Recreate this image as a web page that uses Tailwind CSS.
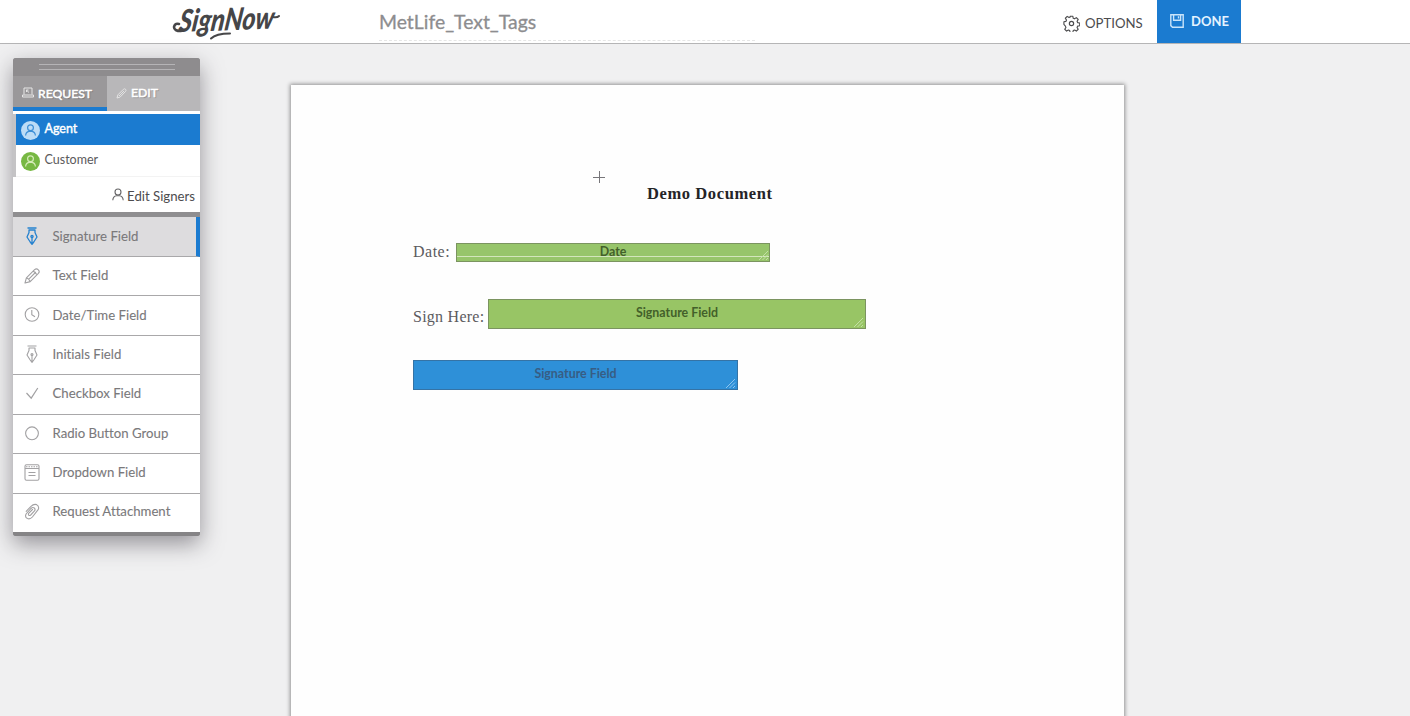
<!DOCTYPE html>
<html lang="en">
<head>
    <meta charset="UTF-8">
    <meta name="viewport" content="width=device-width, initial-scale=1.0">
    <title>MetLife_Text_Tags - SignNow</title>
    <!-- Tailwind CSS -->
    <script src="https://cdn.jsdelivr.net/npm/@tailwindcss/browser@4"></script>
</head>
<body class="h-screen overflow-hidden bg-[#f0f0f1] font-['Lato',sans-serif] [font-variant-ligatures:none] flex flex-col">

    <!-- Top bar -->
    <header class="h-[43.5px] shrink-0 bg-white border-b border-[#b5b5b6] flex">
        <div class="w-[206px] ml-[172px] shrink-0">
            <svg class="w-[130px] h-[42px] overflow-visible" viewBox="0 0 130 42" fill="none">
                <text x="0" y="0" transform="translate(6 32) rotate(-2) skewX(-10)" textLength="95" lengthAdjust="spacingAndGlyphs" font-family="Lato, sans-serif" font-size="31" font-weight="900" font-style="italic" fill="#464648">SignNow</text>
                <!-- swashes on the S, the g and the w -->
                <path d="M9 31q-7 0-7-4 1-4 5-3" stroke="#464648" stroke-width="2.6" stroke-linecap="round"/>
                <path d="M39 38.5q5-5 19-5" stroke="#464648" stroke-width="2" stroke-linecap="round"/>
                <path d="M101 17q4 1 6-1" stroke="#464648" stroke-width="2" stroke-linecap="round"/>
            </svg>
        </div>
        <div class="w-[376px] ml-px h-[41px] border-b border-dashed border-[#e6e6e6] pt-[8px] shrink-0">
            <h1 class="text-[19.4px] leading-[28px] text-[#8d8d8f] [-webkit-text-stroke:0.3px_#8d8d8f]">MetLife_Text_Tags</h1>
        </div>
        <div class="ml-[308px] w-[94px] flex items-center gap-[5px] pt-[4px]">
            <svg class="w-[17px] h-[17px] shrink-0" viewBox="0 0 24 24" fill="none" stroke="#4c4c4e" stroke-width="1.7" stroke-linejoin="round">
                <path d="M10 1.5h4l.7 3.2 1.9.8 2.8-1.8 2.8 2.8-1.7 2.8.8 1.9 3.2.7v4l-3.2.7-.8 1.9 1.7 2.8-2.8 2.8-2.8-1.7-1.9.8-.7 3.2h-4l-.7-3.2-1.9-.8-2.8 1.7-2.8-2.8 1.8-2.8-.8-1.9L.5 14v-4l3.2-.7.8-1.9-1.8-2.8 2.8-2.8 2.8 1.8 1.9-.8z" transform="translate(.8 .3) scale(.93)"/>
                <circle cx="12" cy="12" r="3"/>
            </svg>
            <span class="text-[13.2px] pt-px text-[#4c4c4e]">OPTIONS</span>
        </div>
        <button class="w-[83.5px] h-[42.5px] bg-[#1b7bd0] text-[#e4f3ff] flex items-center gap-[7px] pl-[13px]">
            <svg class="w-[14px] h-[14px] shrink-0" viewBox="0 0 14 14" fill="none" stroke="#c9e4fa" stroke-width="1.4">
                <path d="M.8.8h12.4v12.4H2.5L.8 11.6z"/>
                <path d="M3.6 1v5.2h7V1M8.5 2.2v2.3"/>
            </svg>
            <span class="text-[13px] font-bold pt-px">DONE</span>
        </button>
    </header>

    <main class="flex-1 flex items-start">

        <!-- Tools panel -->
        <aside class="w-[187px] ml-[13px] mt-[14.5px] shrink-0 rounded-t-[3px] rounded-b-[3px] bg-[#8f8e90] shadow-[0_8px_22px_rgba(60,55,65,0.5)] overflow-hidden">
            <div class="h-[18px] flex flex-col items-center pt-[6px] gap-[4px] bg-[#8e8c8e]">
                <div class="w-[136px] h-px bg-[#b5b4b6]"></div>
                <div class="w-[136px] h-px bg-[#b5b4b6]"></div>
            </div>
            <div class="h-[35px] flex text-white text-[12.2px] [text-shadow:1px_1px_1px_rgba(0,0,0,0.25)]">
                <div class="w-[94px] bg-[#9a989a] border-b-4 border-[#1b7bd0] flex items-center gap-[4px] pl-[9px] pt-[5px]">
                    <svg class="w-[12px] h-[11px] shrink-0 -mt-[3px]" viewBox="0 0 12 11" fill="none" stroke="#e6e6e6" stroke-width="1">
                        <path d="M2 7.5V1h8v6.5M.5 8h11v2H.5zM4.5 3.2l2.5 2.3M4.5 5V3h2"/>
                    </svg>
                    <span class="[-webkit-text-stroke:0.5px_white]">REQUEST</span>
                </div>
                <div class="w-[93px] bg-[#b8b7b9] flex items-center gap-[4px] pl-[9px]">
                    <svg class="w-[11px] h-[11px] shrink-0 -mt-px" viewBox="0 0 17 17" fill="none" stroke="#e4e4e4" stroke-width="1.5" stroke-linejoin="round">
                        <path d="M1.5 15.5l1.5-5L11.5 2q1.8-1.5 3.3 0t0 3.3L6.4 14zM4.7 12.4L12.5 4.5"/>
                    </svg>
                    <span class="[-webkit-text-stroke:0.5px_white]">EDIT</span>
                </div>
            </div>

            <!-- Signers -->
            <div class="bg-white pt-[3px] h-[101px] text-[12.5px]">
                <div class="border-l-[3px] border-[#c4c3c5]">
                    <div class="h-[31px] bg-[#1b7bd0] flex items-center pl-[5px] gap-[4.5px] text-white">
                        <svg class="w-[19px] h-[19px] shrink-0 mt-[2px]" viewBox="0 0 19 19" fill="none" stroke="#3d8fd6" stroke-width="1.2">
                            <circle cx="9.5" cy="9.5" r="9.5" fill="#bcdcf6" stroke="none"/>
                            <circle cx="9.5" cy="6.8" r="2.9"/>
                            <path d="M4.6 14.5q.2-3.6 3.4-4.2h3q3.2.6 3.4 4.2"/>
                        </svg>
                        <span class="-mt-px [-webkit-text-stroke:0.4px_white]">Agent</span>
                    </div>
                    <div class="h-[32px] flex items-center pl-[5px] gap-[4.5px] text-[#5b5a5c] border-b border-[#f3f3f3]">
                        <svg class="w-[19px] h-[19px] shrink-0 mt-[2px]" viewBox="0 0 19 19" fill="none" stroke="#d5ebb8" stroke-width="1.2">
                            <circle cx="9.5" cy="9.5" r="9.5" fill="#77b843" stroke="none"/>
                            <circle cx="9.5" cy="6.8" r="2.9"/>
                            <path d="M4.6 14.5q.2-3.6 3.4-4.2h3q3.2.6 3.4 4.2"/>
                        </svg>
                        <span>Customer</span>
                    </div>
                </div>
                <div class="h-[35px] flex items-center justify-end gap-[3px] pr-[5px] pt-[4px] text-[#4d4c4e] text-[13.2px]">
                    <svg class="w-[12px] h-[13px] shrink-0 -mt-[4px]" viewBox="0 0 12 13" fill="none" stroke="#666567" stroke-width="1.1">
                        <circle cx="6" cy="4" r="3"/>
                        <path d="M.8 12.3q.2-4.3 3.8-4.6h2.8q3.6.3 3.8 4.6"/>
                    </svg>
                    <span>Edit Signers</span>
                </div>
            </div>
            <div class="h-[5px] bg-[#8f8e90]"></div>

            <!-- Field types -->
            <ul class="h-[315px] flex flex-col text-[13.2px] text-[#7a797b] [-webkit-text-stroke:0.1px_#7a797b] divide-y divide-[#a9a8aa]">
                <li class="flex-1 bg-[#dddcde] border-r-[4px] border-r-[#1b7bd0] flex items-center pl-[9.5px] gap-[12px]">
                    <svg class="w-[18px] h-[18px] shrink-0" viewBox="0 0 18 18" fill="none" stroke="#2682cf" stroke-width="1.3" stroke-linejoin="round">
                        <path d="M4.5 1h9M6 3h6v2.5l2 4.5-3.2 5L9 17.3 7.2 15 4 10l2-4.5zM9 17V9.5"/>
                        <circle cx="9" cy="9.5" r="1.1"/>
                    </svg>
                    <span class="pt-px">Signature Field</span>
                </li>
                <li class="flex-1 bg-white flex items-center pl-[9.5px] gap-[12px]">
                    <svg class="w-[18px] h-[18px] shrink-0" viewBox="0 0 18 18" fill="none" stroke="#a2a1a3" stroke-width="1.1" stroke-linejoin="round">
                        <path d="M2 16l1.4-5.2 8.2-8.2q1.9-1.5 3.7.2t.1 3.6l-8.2 8.2zM3.4 10.8q2.4 1 3.8 3.8M5.3 12.6l7.6-7.6M10.3 4l3.7 3.7"/>
                    </svg>
                    <span class="pt-px">Text Field</span>
                </li>
                <li class="flex-1 bg-white flex items-center pl-[9.5px] gap-[12px]">
                    <svg class="w-[18px] h-[18px] shrink-0" viewBox="0 0 18 18" fill="none" stroke="#a2a1a3" stroke-width="1.1">
                        <circle cx="9" cy="8.5" r="6.8"/>
                        <path d="M8.8 4v4.7l3.2 2"/>
                    </svg>
                    <span class="pt-px">Date/Time Field</span>
                </li>
                <li class="flex-1 bg-white flex items-center pl-[9.5px] gap-[12px]">
                    <svg class="w-[18px] h-[18px] shrink-0 -mt-px" viewBox="0 0 18 18" fill="none" stroke="#a2a1a3" stroke-width="1.1" stroke-linejoin="round">
                        <path d="M4.5 1h9M6 3h6v2.5l2 4.5-3.2 5L9 17.3 7.2 15 4 10l2-4.5zM9 17V9.5"/>
                        <circle cx="9" cy="9.5" r="1"/>
                    </svg>
                    <span>Initials Field</span>
                </li>
                <li class="flex-1 bg-white flex items-center pl-[9.5px] gap-[12px]">
                    <svg class="w-[18px] h-[18px] shrink-0" viewBox="0 0 18 18" fill="none" stroke="#a2a1a3" stroke-width="1.2">
                        <path d="M3.5 8l4.7 5.2L14.8 3"/>
                    </svg>
                    <span>Checkbox Field</span>
                </li>
                <li class="flex-1 bg-white flex items-center pl-[9.5px] gap-[12px]">
                    <svg class="w-[18px] h-[18px] shrink-0" viewBox="0 0 18 18" fill="none" stroke="#a2a1a3" stroke-width="1.1">
                        <circle cx="9" cy="8.3" r="6.4"/>
                    </svg>
                    <span>Radio Button Group</span>
                </li>
                <li class="flex-1 bg-white flex items-center pl-[9.5px] gap-[12px]">
                    <svg class="w-[18px] h-[18px] shrink-0" viewBox="0 0 18 18" fill="none" stroke="#a2a1a3" stroke-width="1.1">
                        <rect x="2" y=".8" width="14" height="15.4" rx="1.5"/>
                        <path d="M2 4.500h14M5.500 8.500h7M5.500 11.500h7"/>
                        <path d="M3 2.700h12" stroke-dasharray="1.500 1"/>
                    </svg>
                    <span>Dropdown Field</span>
                </li>
                <li class="flex-1 bg-white flex items-center pl-[9.5px] gap-[12px]">
                    <svg class="w-[18px] h-[18px] shrink-0 -mt-px" viewBox="0 0 18 18" fill="none" stroke="#a2a1a3" stroke-width="1.1" stroke-linecap="round">
                        <path d="M3.200 8.300L8 3.300q2.700-2.600 5.600-1.700 2.900 1.700 1.700 4.800L9.400 14q-2.400 2.700-5 1.600-2.900-1.500-1.300-4.600L8 5.500q1.700-1.600 3.300-.5 1.400 1.400.2 3l-3.800 4q-1.200.9-2 .1-.7-1 .2-1.900l3.600-3.700"/>
                    </svg>
                    <span class="-mt-px">Request Attachment</span>
                </li>
            </ul>
            <div class="h-[4px] bg-[#858486]"></div>
        </aside>

        <!-- Document page -->
        <section class="relative w-[833px] h-[640px] ml-[91px] mt-[41.5px] shrink-0 bg-[#fefefe] shadow-[0_0_4px_1px_rgba(0,0,0,0.4)] font-['Liberation_Serif',serif] text-[#5c5b5e]">
            <h2 class="pt-[98px] pl-[356px] text-[16.5px] leading-[22px] font-bold tracking-[0.6px] text-[#252427]">Demo Document</h2>

            <div class="flex items-start ml-[122px] mt-[38px]">
                <span class="w-[43px] text-[16px] leading-[18px] tracking-[0.5px]">Date:</span>
                <div class="relative w-[314px] h-[19px] bg-[#97c56b] border border-[#7b9460] text-center font-['Lato',sans-serif] text-[12.4px] leading-[16px] font-bold text-[#43602a]">
                    Date
                    <div class="absolute inset-x-0 bottom-[4px] h-px bg-[#d3e6bd]"></div>
                    <svg class="absolute right-0 bottom-0 w-[11px] h-[11px]" viewBox="0 0 11 11" stroke="#c4e0a6"><path d="M1 10L10 1M4.5 10L10 4.5M8 10l2-2"/></svg>
                </div>
            </div>

            <div class="flex items-start ml-[122px] mt-[37px]">
                <span class="w-[75px] pt-[9px] text-[16px] leading-[18px] tracking-[0.25px] whitespace-nowrap">Sign Here:</span>
                <div class="relative w-[378px] h-[30px] bg-[#98c565] border border-[#7b9460] text-center font-['Lato',sans-serif] text-[12.4px] leading-[26px] font-bold text-[#43602a]">
                    Signature Field
                    <svg class="absolute right-px bottom-0 w-[11px] h-[11px]" viewBox="0 0 11 11" stroke="#c4e0a6"><path d="M1 10L10 1M4.5 10L10 4.5M8 10l2-2"/></svg>
                </div>
            </div>

            <div class="relative w-[325px] h-[30px] ml-[122px] mt-[30.5px] bg-[#2e90d8] border border-[#3573a5] text-center font-['Lato',sans-serif] text-[12.4px] leading-[25px] font-bold text-[#375d84]">
                Signature Field
                <svg class="absolute right-px bottom-0 w-[11px] h-[11px]" viewBox="0 0 11 11" stroke="#8cc5ef"><path d="M1 10L10 1M4.5 10L10 4.5M8 10l2-2"/></svg>
            </div>

            <!-- Crosshair cursor -->
            <svg class="absolute left-[302px] top-[86px] w-[12px] h-[12px]" viewBox="0 0 12 12" stroke="#77767a"><path d="M0 6.5h12M6.5 0v12"/></svg>
        </section>
    </main>
</body>
</html>
